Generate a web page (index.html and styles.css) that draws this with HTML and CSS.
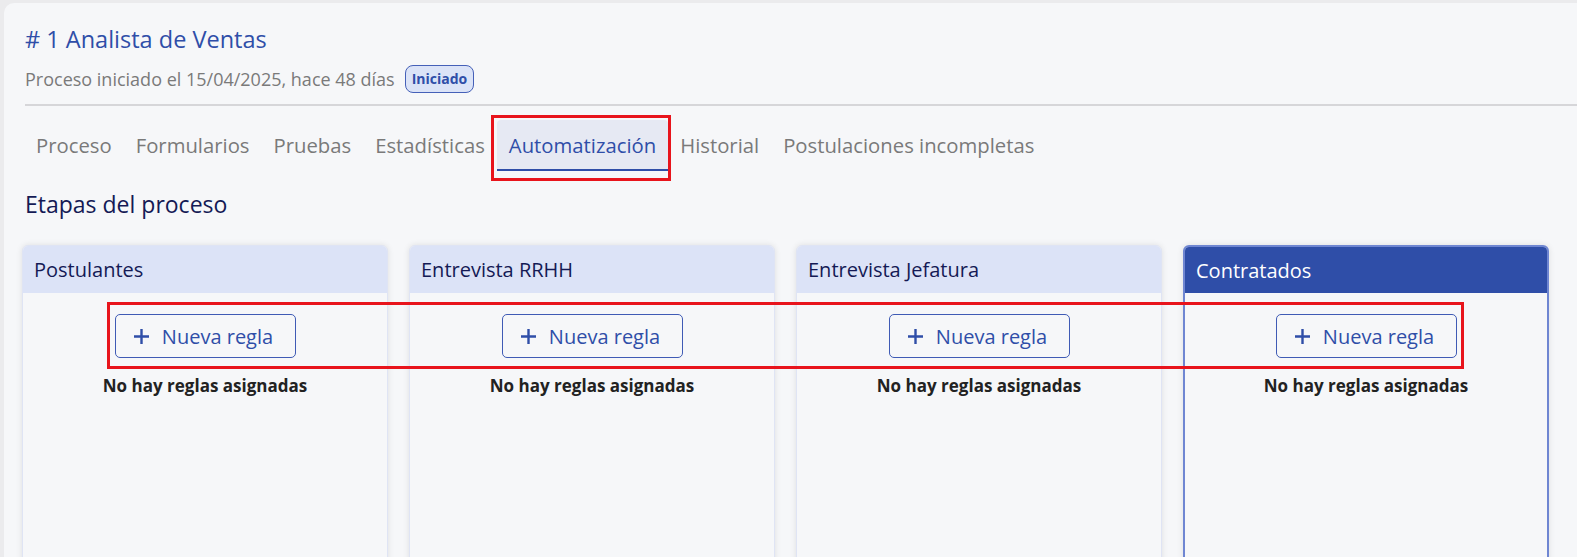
FILE: index.html
```html
<!DOCTYPE html>
<html lang="es">
<head>
<meta charset="utf-8">
<title>Analista de Ventas</title>
<link rel="stylesheet" href="styles.css">
</head>
<body>
<div class="card">
  <header class="head">
    <h1 class="title"># 1 Analista de Ventas</h1>
    <div class="meta">
      <span>Proceso iniciado el 15/04/2025, hace 48 días</span>
      <span class="badge">Iniciado</span>
    </div>
  </header>
  <nav class="tabs">
    <span class="tab">Proceso</span>
    <span class="tab">Formularios</span>
    <span class="tab">Pruebas</span>
    <span class="tab">Estadísticas</span>
    <span class="tab active">Automatización<span class="mark mark-tab"></span></span>
    <span class="tab">Historial</span>
    <span class="tab">Postulaciones incompletas</span>
  </nav>
  <h2 class="section">Etapas del proceso</h2>
  <div class="board">
    <span class="mark mark-row"></span>
    <section class="stage">
      <div class="stage-head">Postulantes</div>
      <div class="stage-body">
        <button class="btn"><svg width="17" height="17" viewBox="0 0 17 17"><path d="M8.5 1v15M1 8.5h15" stroke="currentColor" stroke-width="2.4" fill="none"/></svg>Nueva regla</button>
        <p class="empty">No hay reglas asignadas</p>
      </div>
    </section>
    <section class="stage">
      <div class="stage-head">Entrevista RRHH</div>
      <div class="stage-body">
        <button class="btn"><svg width="17" height="17" viewBox="0 0 17 17"><path d="M8.5 1v15M1 8.5h15" stroke="currentColor" stroke-width="2.4" fill="none"/></svg>Nueva regla</button>
        <p class="empty">No hay reglas asignadas</p>
      </div>
    </section>
    <section class="stage">
      <div class="stage-head">Entrevista Jefatura</div>
      <div class="stage-body">
        <button class="btn"><svg width="17" height="17" viewBox="0 0 17 17"><path d="M8.5 1v15M1 8.5h15" stroke="currentColor" stroke-width="2.4" fill="none"/></svg>Nueva regla</button>
        <p class="empty">No hay reglas asignadas</p>
      </div>
    </section>
    <section class="stage final">
      <div class="stage-head">Contratados</div>
      <div class="stage-body">
        <button class="btn"><svg width="17" height="17" viewBox="0 0 17 17"><path d="M8.5 1v15M1 8.5h15" stroke="currentColor" stroke-width="2.4" fill="none"/></svg>Nueva regla</button>
        <p class="empty">No hay reglas asignadas</p>
      </div>
    </section>
  </div>
</div>
</body>
</html>
```
FILE: styles.css
```css
* { box-sizing: border-box; }
html, body { margin: 0; padding: 0; }
body {
  background: #ebebed;
  font-family: "Open Sans", "Noto Sans", sans-serif;
  overflow: hidden;
  height: 557px;
}
.card {
  margin: 3px 0 0 4px;
  width: 1600px;
  height: 600px;
  background: #f6f7f9;
  border-radius: 10px;
  padding: 23px 0 0 18px;
}
.head {
  margin-left: 3px;
  border-bottom: 2px solid #d6d6d9;
  padding-bottom: 11px;
}
.title {
  margin: 0;
  font-size: 23.5px;
  font-weight: 400;
  color: #2f4ea8;
  line-height: 27px;
}
.meta {
  margin-top: 12px;
  display: flex;
  align-items: center;
  gap: 10px;
  font-size: 18px;
  color: #7a7a7a;
  line-height: 28px;
}
.badge {
  background: #dbe3f7;
  border: 1px solid #4560b8;
  color: #2f4ea8;
  border-radius: 8px;
  font-size: 14px;
  font-weight: 700;
  padding: 0 6px;
  line-height: 26px;
}
.tabs {
  display: flex;
  margin-top: 14px;
  margin-left: 2px;
}
.tab {
  position: relative;
  padding: 0 12px 2px;
  height: 51px;
  display: flex;
  align-items: center;
  font-size: 20.3px;
  color: #7a7a7a;
}
.tab.active {
  background: #e6e9f3;
  color: #2f4ea8;
  border-radius: 4px 4px 0 0;
  border-bottom: 2px solid #2f4ea8;
  padding-bottom: 0;
}
.section {
  margin: 19px 0 0 3px;
  font-size: 23px;
  font-weight: 400;
  color: #141a55;
  line-height: 28px;
}
.board {
  position: relative;
  margin-top: 27px;
  display: flex;
  gap: 21px;
}
.stage {
  width: 366px;
  height: 330px;
  border: 1px solid #dfe4f4;
  border-radius: 6px 6px 0 0;
  box-shadow: 0 0 6px rgba(0,0,0,0.10);
  background: #f6f7f9;
  overflow: hidden;
}
.stage-head {
  height: 47px;
  background: #dce3f7;
  padding: 0 11px;
  display: flex;
  align-items: center;
  font-size: 20px;
  color: #141a55;
}
.stage.final { border: 2px solid #6f86d2; }
.stage.final .stage-head { background: #2f4ea8; color: #fff; height: 46px; }
.stage-body {
  display: flex;
  flex-direction: column;
  align-items: center;
  padding-top: 21px;
}
.btn {
  width: 181px;
  height: 44px;
  border: 1px solid #3f5bb5;
  border-radius: 5px;
  background: transparent;
  color: #2f4ea8;
  font-family: inherit;
  font-size: 20px;
  display: flex;
  align-items: center;
  justify-content: center;
  gap: 12px;
  padding: 0;
}
.btn svg { margin-left: -4px; }
.empty {
  margin: 16px 0 0;
  font-size: 17px;
  font-weight: 700;
  color: #222;
}
.mark {
  position: absolute;
  border: 3px solid #e8141c;
  pointer-events: none;
}
.mark-tab {
  left: -6px;
  top: -5px;
  right: -3px;
  bottom: -12px;
}
.mark-row {
  left: 85px;
  top: 57px;
  width: 1357px;
  height: 67px;
  z-index: 2;
}
```
